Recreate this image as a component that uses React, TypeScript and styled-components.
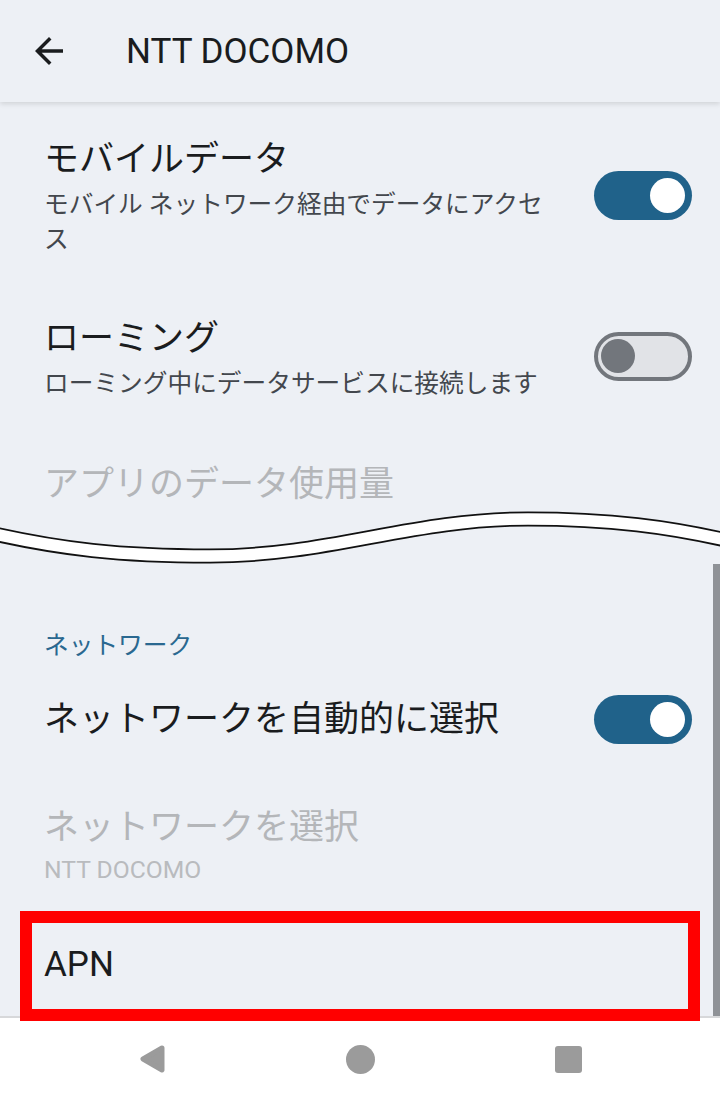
import styled, { createGlobalStyle } from "styled-components"

const GlobalStyle = createGlobalStyle`
  html, body {
    margin: 0;
    padding: 0;
    background: #edf0f5;
  }
  body {
    font-family: Roboto, "Noto Sans CJK JP", sans-serif;
  }
`

const Screen = styled.div`
  width: 720px;
  height: 1100px;
  display: flex;
  flex-direction: column;
  background: #edf0f5;
  overflow: hidden;
`

const Header = styled.header`
  position: relative;
  z-index: 1;
  flex: none;
  height: 102px;
  display: flex;
  align-items: center;
  gap: 56px;
  padding-left: 28px;
  background: #edf0f5;
  box-shadow: 0 2px 5px rgba(0, 0, 0, 0.12);
`

const HeaderTitle = styled.h1`
  margin: 0;
  font-size: 35px;
  font-weight: 400;
  color: #1a1c1e;
`

const Row = styled.div<{ $top?: number; $bottom?: number }>`
  display: flex;
  align-items: center;
  gap: 32px;
  padding: ${p => p.$top ?? 32}px 28px ${p => p.$bottom ?? 30}px 44px;
`

const Texts = styled.div`
  flex: 1;
  min-width: 0;
  display: flex;
  flex-direction: column;
  gap: 5px;
`

const Title = styled.div<{ $disabled?: boolean }>`
  font-size: 35px;
  line-height: 44px;
  color: ${p => (p.$disabled ? "#b4b6b9" : "#1a1c1e")};
`

const Summary = styled.div<{ $disabled?: boolean }>`
  font-size: 24.7px;
  line-height: 35px;
  color: ${p => (p.$disabled ? "#b9bbbe" : "#43474d")};
  margin-top: ${p => (p.$disabled ? -3 : 0)}px;
`

const Track = styled.div<{ $on: boolean; $lift?: number }>`
  flex: none;
  box-sizing: border-box;
  width: 98px;
  height: 49px;
  border-radius: 25px;
  margin-bottom: ${p => (p.$lift ?? 0) * 2}px;
  display: flex;
  align-items: center;
  justify-content: ${p => (p.$on ? "flex-end" : "flex-start")};
  padding: 0 ${p => (p.$on ? 7 : 3)}px;
  background: ${p => (p.$on ? "#20628a" : "#e1e3e7")};
  border: ${p => (p.$on ? "none" : "4px solid #72767c")};
`

const Knob = styled.div<{ $on: boolean }>`
  width: ${p => (p.$on ? 35 : 34)}px;
  height: ${p => (p.$on ? 35 : 34)}px;
  border-radius: 50%;
  background: ${p => (p.$on ? "#ffffff" : "#72767c")};
`

const Wave = styled.svg`
  display: block;
  flex: none;
  width: 720px;
  height: 56px;
  overflow: visible;
`

const Lower = styled.section`
  position: relative;
  flex: 1;
  min-height: 0;
`

const Category = styled.div`
  padding: 63px 44px 0;
  font-size: 24.7px;
  line-height: 34px;
  color: #2a6890;
`

const ScrollThumb = styled.div`
  position: absolute;
  top: -2px;
  right: 0;
  bottom: 0;
  width: 7px;
  background: #8f9297;
`

const Highlight = styled.div`
  position: absolute;
  z-index: 2;
  left: 20px;
  right: 20px;
  bottom: -5px;
  height: 110px;
  box-sizing: border-box;
  border: 12px solid #ff0000;
  pointer-events: none;
`

const NavBar = styled.nav`
  position: relative;
  z-index: 1;
  flex: none;
  height: 82px;
  border-top: 2px solid #d7d8da;
  background: #ffffff;
  display: grid;
  grid-template-columns: repeat(3, 1fr);
  align-items: center;
  justify-items: center;
  padding: 0 48px;
`

const HomeDot = styled.div`
  width: 29px;
  height: 29px;
  border-radius: 50%;
  background: #9b9b9b;
`

const RecentSquare = styled.div`
  width: 27px;
  height: 27px;
  border-radius: 3px;
  background: #9b9b9b;
`

function Switch({ on, lift }: { on: boolean; lift?: number }) {
  return (
    <Track $on={on} $lift={lift}>
      <Knob $on={on} />
    </Track>
  )
}

const wavePath =
  "M-10 23 C 60 39, 120 46, 210 46 C 330 46, 410 9, 528 9 C 610 9, 670 17, 730 31"

export default function App() {
  return (
    <Screen>
      <GlobalStyle />
      <Header>
        <svg width="42" height="42" viewBox="0 0 24 24" fill="#1a1c1e">
          <path d="M20 11H7.83l5.59-5.59L12 4l-8 8 8 8 1.41-1.41L7.83 13H20v-2z" />
        </svg>
        <HeaderTitle>NTT DOCOMO</HeaderTitle>
      </Header>

      <Row $top={36} $bottom={28}>
        <Texts>
          <Title>モバイルデータ</Title>
          <Summary>モバイル ネットワーク経由でデータにアクセス</Summary>
        </Texts>
        <Switch on lift={2} />
      </Row>
      <Row>
        <Texts>
          <Title>ローミング</Title>
          <Summary>ローミング中にデータサービスに接続します</Summary>
        </Texts>
        <Switch on={false} lift={3} />
      </Row>
      <Row $bottom={3}>
        <Texts>
          <Title $disabled>アプリのデータ使用量</Title>
        </Texts>
      </Row>

      <Wave viewBox="0 0 720 56">
        <path d={wavePath} fill="none" stroke="#111" strokeWidth="15" />
        <path d={wavePath} fill="none" stroke="#fff" strokeWidth="11.5" />
      </Wave>

      <Lower>
        <ScrollThumb />
        <Category>ネットワーク</Category>
        <Row>
          <Texts>
            <Title>ネットワークを自動的に選択</Title>
          </Texts>
          <Switch on />
        </Row>
        <Row $bottom={24}>
          <Texts>
            <Title $disabled>ネットワークを選択</Title>
            <Summary $disabled>NTT DOCOMO</Summary>
          </Texts>
        </Row>
        <Row $bottom={20}>
          <Texts>
            <Title>APN</Title>
          </Texts>
        </Row>
        <Highlight />
      </Lower>

      <NavBar>
        <svg width="28" height="30" viewBox="0 0 28 30">
          <path d="M24 4 L5 15 L24 26 Z" fill="#9b9b9b" stroke="#9b9b9b" strokeWidth="5" strokeLinejoin="round" />
        </svg>
        <HomeDot />
        <RecentSquare />
      </NavBar>
    </Screen>
  )
}
